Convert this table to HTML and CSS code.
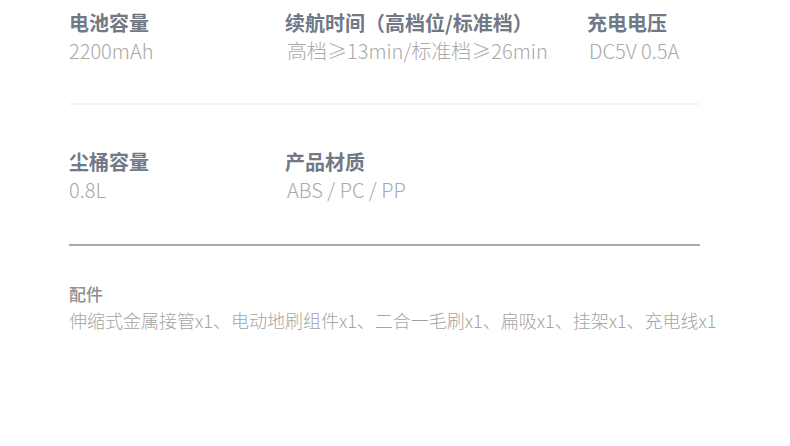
FILE: index.html
```html
<!DOCTYPE html>
<html lang="zh-CN">

<head>
    <meta charset="UTF-8" />
    <title>产品参数</title>
    <link rel="stylesheet" href="styles.css">
</head>

<body>
    <div class="specs">
        <div class="spec-row">
            <div class="spec">
                <div class="spec-label">电池容量</div>
                <div class="spec-value">2200mAh</div>
            </div>
            <div class="spec">
                <div class="spec-label">续航时间（高档位/标准档）</div>
                <div class="spec-value indent">高档≥13min/标准档≥26min</div>
            </div>
            <div class="spec">
                <div class="spec-label">充电电压</div>
                <div class="spec-value indent">DC5V 0.5A</div>
            </div>
        </div>

        <div class="spec-row second">
            <div class="spec">
                <div class="spec-label">尘桶容量</div>
                <div class="spec-value">0.8L</div>
            </div>
            <div class="spec">
                <div class="spec-label">产品材质</div>
                <div class="spec-value indent">ABS / PC / PP</div>
            </div>
        </div>

        <div class="accessories">
            <div class="acc-label">配件</div>
            <div class="acc-value">伸缩式金属接管x1、电动地刷组件x1、二合一毛刷x1、扁吸x1、挂架x1、充电线x1</div>
        </div>
    </div>
</body>

</html>
```

FILE: styles.css
```css
body {
    margin: 0;
    background: #fff;
    font-family: 'Noto Sans CJK SC', 'Noto Sans', sans-serif;
}

.specs {
    width: 631px;
    margin-left: 69px;
    padding-top: 9px;
}

.spec-row {
    display: grid;
    grid-template-columns: 216px 302px 1fr;
    padding-bottom: 38px;
    border-bottom: 2px solid #f4f4f4;
}

.spec-row.second {
    padding-top: 43px;
    padding-bottom: 40px;
    border-bottom: 2px solid #a9a9a9;
}

.spec-label {
    font-size: 20px;
    line-height: 28px;
    font-weight: 700;
    color: #717886;
    white-space: nowrap;
}

.spec-value {
    font-size: 20px;
    line-height: 28px;
    font-weight: 300;
    color: #a9a9a9;
    white-space: nowrap;
}

.spec-value.indent {
    padding-left: 2px;
}

.accessories {
    padding-top: 35px;
}

.acc-label {
    font-size: 17px;
    line-height: 26px;
    font-weight: 500;
    color: #8e8e8e;
}

.acc-value {
    font-size: 18px;
    line-height: 26px;
    font-weight: 300;
    color: #a4a4a4;
    white-space: nowrap;
}
```
